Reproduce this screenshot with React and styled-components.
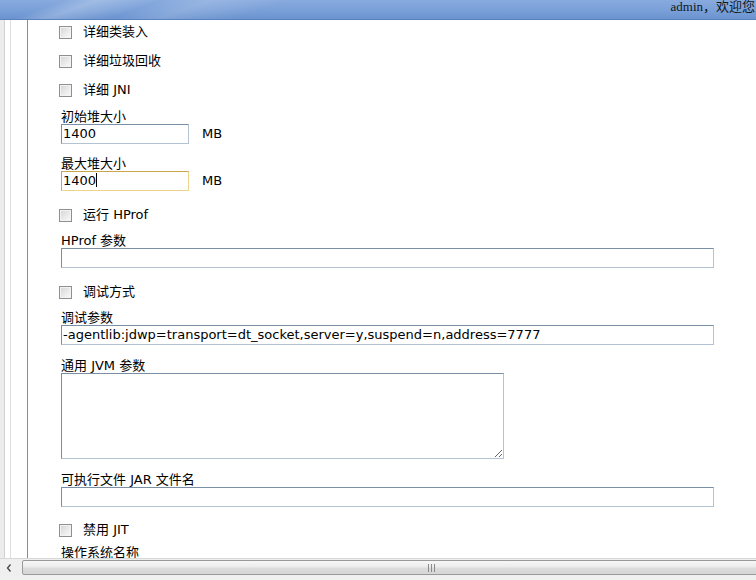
import styled, { createGlobalStyle } from 'styled-components';

const GlobalStyle = createGlobalStyle`
    html, body {
        margin: 0;
        padding: 0;
        background: #ffffff;
    }
`;

const checks1 = [
    { label: '详细类装入', top: 4 },
    { label: '详细垃圾回收', top: 13 },
    { label: '详细 JNI', top: 13 },
];

const App = () => {
    return (
        <Page>
            <GlobalStyle />
            <Header>
                <Welcome>admin，欢迎您</Welcome>
            </Header>
            <Body>
                <Rail>
                    <RailCol $w={4} $bg='#ececec' $line='#d2d2d2' />
                    <RailCol $w={5} $line='#dedede' />
                    <RailCol $w={16} $line='#8c8c8c' />
                </Rail>
                <Content>
                    {checks1.map(c => <CheckItem key={c.label} label={c.label} top={c.top} />)}
                    <Field $top={11}>
                        <Label>初始堆大小</Label>
                        <UnitRow>
                            <TextBox $w={128}>1400</TextBox>
                            <Unit>MB</Unit>
                        </UnitRow>
                    </Field>
                    <Field $top={12}>
                        <Label>最大堆大小</Label>
                        <UnitRow>
                            <TextBox $w={128} $focus>1400<Caret /></TextBox>
                            <Unit>MB</Unit>
                        </UnitRow>
                    </Field>
                    <CheckItem label='运行 HProf' top={16} />
                    <Field $top={10}>
                        <Label>HProf 参数</Label>
                        <TextBox $w={653}></TextBox>
                    </Field>
                    <CheckItem label='调试方式' top={16} />
                    <Field $top={10}>
                        <Label>调试参数</Label>
                        <TextBox $w={653}>-agentlib:jdwp=transport=dt_socket,server=y,suspend=n,address=7777</TextBox>
                    </Field>
                    <Field $top={13}>
                        <Label>通用 JVM 参数</Label>
                        <TextArea readOnly defaultValue='' />
                    </Field>
                    <Field $top={13}>
                        <Label>可执行文件 JAR 文件名</Label>
                        <TextBox $w={653}></TextBox>
                    </Field>
                    <CheckItem label='禁用 JIT' top={15} />
                    <Field $top={7}>
                        <Label>操作系统名称</Label>
                    </Field>
                </Content>
            </Body>
            <HScroll>
                <ArrowBtn>
                    <svg width='6' height='8' viewBox='0 0 6 8'>
                        <path d='M4.5 0.5 L1.5 4 L4.5 7.5' fill='none' stroke='#4a4a4a' strokeWidth='1.4' />
                    </svg>
                </ArrowBtn>
                <Thumb>
                    <svg width='9' height='8' viewBox='0 0 9 8'>
                        <path d='M1.5 0 V8 M4.5 0 V8 M7.5 0 V8' stroke='#8a8a8a' strokeWidth='1' />
                    </svg>
                </Thumb>
            </HScroll>
            <Footer />
        </Page>
    )
};

export default App;

const CheckItem = ({ label, top }) => (
    <CheckRow $top={top}>
        <Box />
        <span>{label}</span>
    </CheckRow>
)

const Page = styled.div`
    width: 756px;
    height: 580px;
    display: flex;
    flex-direction: column;
    overflow: hidden;
    background: #ffffff;
    font-family: "DejaVu Sans", "Noto Sans CJK SC", sans-serif;
    font-size: 13px;
    color: #000000;
`

const Header = styled.div`
    height: 19px;
    flex: none;
    display: flex;
    justify-content: flex-end;
    align-items: flex-start;
    overflow: hidden;
    border-bottom: 1px solid #5a82bf;
    background:
        linear-gradient(160deg, rgba(255,255,255,0) 8%, rgba(255,255,255,0.22) 12%, rgba(255,255,255,0) 20%, rgba(255,255,255,0.15) 26%, rgba(255,255,255,0) 36%),
        linear-gradient(to bottom, #88aade 0%, #7aa0d8 55%, #6b93cf 100%);
`

const Welcome = styled.span`
    margin-right: 1px;
    font-family: "Liberation Serif", "Noto Sans CJK SC", serif;
    font-size: 13px;
    line-height: 13px;
    white-space: nowrap;
    color: #101820;
`

const Body = styled.div`
    flex: 1;
    min-height: 0;
    display: flex;
    overflow: hidden;
`

const Rail = styled.div`
    flex: none;
    display: flex;
`

const RailCol = styled.div`
    width: ${p => p.$w}px;
    background: ${p => p.$bg || '#ffffff'};
    border-right: 1px solid ${p => p.$line};
`

const Content = styled.div`
    flex: 1;
    display: flex;
    flex-direction: column;
    align-items: flex-start;
    padding-left: 33px;
`

const CheckRow = styled.div`
    margin-top: ${p => p.$top}px;
    height: 16px;
    display: flex;
    align-items: center;
    line-height: 16px;
`

const Box = styled.span`
    width: 13px;
    height: 13px;
    box-sizing: border-box;
    margin-left: -2px;
    margin-right: 11px;
    border: 1px solid #8e8f8f;
    background: linear-gradient(135deg, #d4d4d4 0%, #ececec 60%, #fafafa 100%);
    box-shadow: inset 0 0 0 1px #f3f3f3;
`

const Field = styled.div`
    margin-top: ${p => p.$top}px;
    display: flex;
    flex-direction: column;
    align-items: flex-start;
`

const Label = styled.div`
    height: 15px;
    line-height: 15px;
    white-space: nowrap;
`

const UnitRow = styled.div`
    display: flex;
    align-items: center;
`

const TextBox = styled.div`
    width: ${p => p.$w}px;
    height: 20px;
    box-sizing: border-box;
    padding: 0 1px;
    line-height: 18px;
    white-space: nowrap;
    overflow: hidden;
    background: #ffffff;
    border: 1px solid;
    border-color: ${p => p.$focus
        ? '#c9a64e #ecd48a #ecd48a #c9a64e'
        : '#7a8fa6 #b3c3d3 #b3c3d3 #7a8fa6'};
`

const Caret = styled.span`
    display: inline-block;
    width: 1px;
    height: 14px;
    vertical-align: -2px;
    background: #000000;
`

const Unit = styled.span`
    margin-left: 13px;
    line-height: 20px;
`

const TextArea = styled.textarea`
    width: 443px;
    height: 86px;
    box-sizing: border-box;
    margin: 0;
    padding: 1px;
    font: inherit;
    background: #ffffff;
    border: 1px solid;
    border-color: #7a8fa6 #b3c3d3 #b3c3d3 #7a8fa6;
    outline: none;
`

const HScroll = styled.div`
    height: 18px;
    flex: none;
    display: flex;
    align-items: stretch;
    overflow: hidden;
    background: #efefef;
    border-top: 1px solid #d8d8d8;
    box-sizing: border-box;
`

const ArrowBtn = styled.div`
    width: 22px;
    flex: none;
    display: flex;
    align-items: center;
    justify-content: center;
    padding-right: 4px;
    box-sizing: border-box;
`

const Thumb = styled.div`
    width: 816px;
    flex: none;
    margin: 1px 0 1px;
    display: flex;
    align-items: center;
    justify-content: center;
    border: 1px solid #9a9a9a;
    border-radius: 2px;
    background: linear-gradient(to bottom, #f7f7f7 0%, #ececec 45%, #dcdcdc 55%, #d6d6d6 100%);
`

const Footer = styled.div`
    height: 4px;
    flex: none;
    background: #f0f0f0;
`
